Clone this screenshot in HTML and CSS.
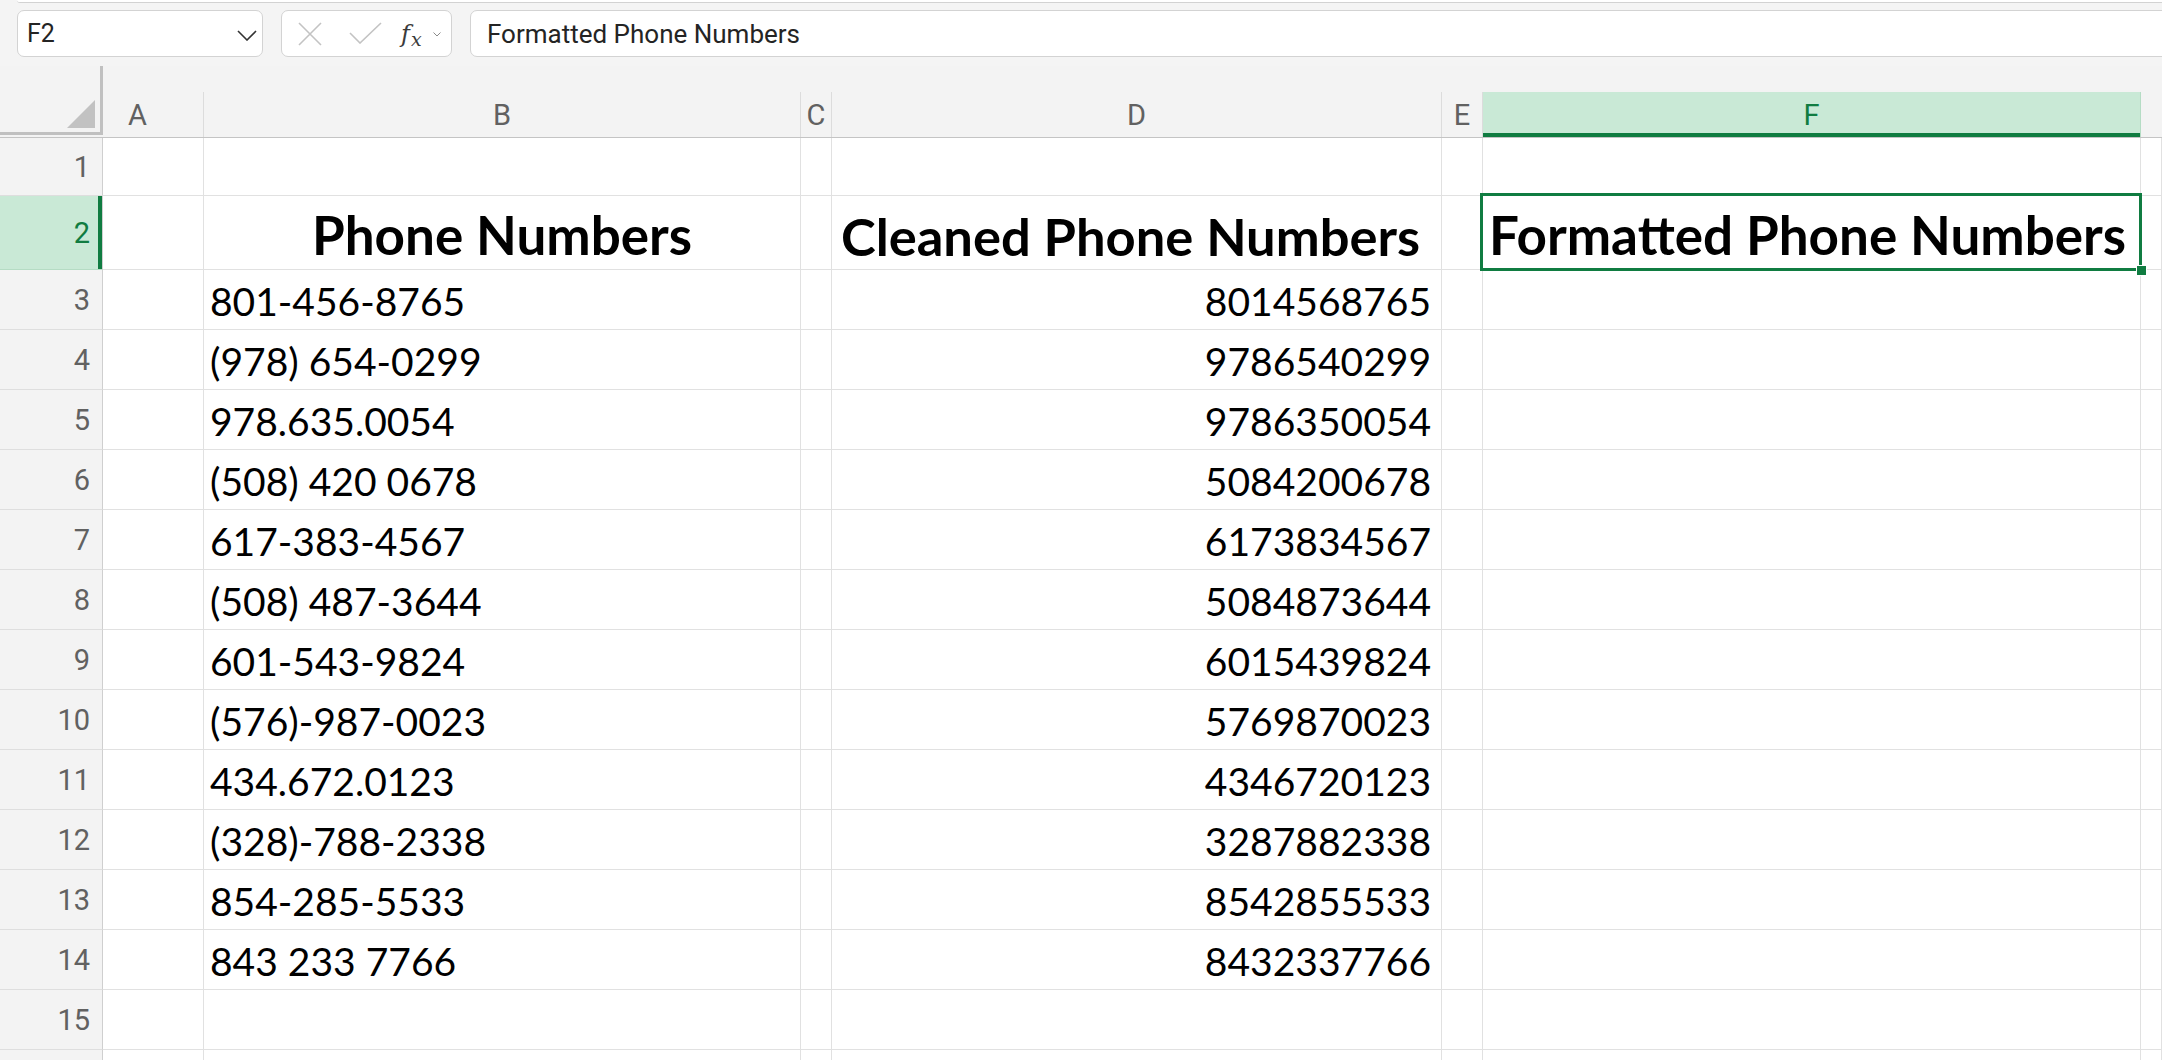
FILE: index.html
```html
<!DOCTYPE html>
<html lang="en">
<head>
<meta charset="utf-8">
<title>Phone Numbers</title>
<link rel="stylesheet" href="styles.css">
</head>
<body>
<div class="app">
  <div class="ribbon-edge"></div>
  <div class="fbar">
    <div class="namebox">
      <span class="nb-text">F2</span>
      <svg class="nb-chev" width="20" height="11" viewBox="0 0 20 11"><path d="M1 1 L10 10 L19 1" fill="none" stroke="#333" stroke-width="1.6"/></svg>
    </div>
    <div class="fxbox">
      <svg class="ic-x" width="24" height="24" viewBox="0 0 24 24"><path d="M1 1 L23 23 M23 1 L1 23" fill="none" stroke="#c3c3c3" stroke-width="1.6"/></svg>
      <svg class="ic-check" width="33" height="22" viewBox="0 0 33 22"><path d="M1 11 L11 21 L32 1" fill="none" stroke="#c3c3c3" stroke-width="1.6"/></svg>
      <span class="fx"><i class="fx-f">f</i><i class="fx-x">x</i></span>
      <svg class="ic-small" width="8" height="5" viewBox="0 0 8 5"><path d="M0.5 0.5 L4 4 L7.5 0.5" fill="none" stroke="#8a8a8a" stroke-width="1"/></svg>
    </div>
    <div class="formula">Formatted Phone Numbers</div>
  </div>

  <div class="sheet">
    <div class="row hdr">
      <div class="corner"><span class="tri"></span></div>
      <div class="ch"><div class="lab lab-a">A</div></div>
      <div class="ch"><div class="lab">B</div></div>
      <div class="ch"><div class="lab">C</div></div>
      <div class="ch"><div class="lab">D</div></div>
      <div class="ch"><div class="lab">E</div></div>
      <div class="ch sel"><div class="lab">F</div></div>
      <div class="ch"><div class="lab last"></div></div>
    </div>

    <div class="row r1">
      <div class="rh">1</div><div></div><div></div><div></div><div></div><div></div><div></div><div></div>
    </div>

    <div class="row r2">
      <div class="rh sel">2</div>
      <div></div>
      <div class="c h ctr">Phone Numbers</div>
      <div></div>
      <div class="c h ctr hd-d">Cleaned Phone Numbers</div>
      <div></div>
      <div class="c h ctr hd-f active">Formatted Phone Numbers<span class="selbox"></span><span class="handle"></span></div>
      <div></div>
    </div>

    <div class="row rn"><div class="rh">3</div><div></div><div class="c t">801-456-8765</div><div></div><div class="c t num">8014568765</div><div></div><div></div><div></div></div>
    <div class="row rn"><div class="rh">4</div><div></div><div class="c t">(978) 654-0299</div><div></div><div class="c t num">9786540299</div><div></div><div></div><div></div></div>
    <div class="row rn"><div class="rh">5</div><div></div><div class="c t">978.635.0054</div><div></div><div class="c t num">9786350054</div><div></div><div></div><div></div></div>
    <div class="row rn"><div class="rh">6</div><div></div><div class="c t">(508) 420 0678</div><div></div><div class="c t num">5084200678</div><div></div><div></div><div></div></div>
    <div class="row rn"><div class="rh">7</div><div></div><div class="c t">617-383-4567</div><div></div><div class="c t num">6173834567</div><div></div><div></div><div></div></div>
    <div class="row rn"><div class="rh">8</div><div></div><div class="c t">(508) 487-3644</div><div></div><div class="c t num">5084873644</div><div></div><div></div><div></div></div>
    <div class="row rn"><div class="rh">9</div><div></div><div class="c t">601-543-9824</div><div></div><div class="c t num">6015439824</div><div></div><div></div><div></div></div>
    <div class="row rn"><div class="rh">10</div><div></div><div class="c t">(576)-987-0023</div><div></div><div class="c t num">5769870023</div><div></div><div></div><div></div></div>
    <div class="row rn"><div class="rh">11</div><div></div><div class="c t">434.672.0123</div><div></div><div class="c t num">4346720123</div><div></div><div></div><div></div></div>
    <div class="row rn"><div class="rh">12</div><div></div><div class="c t">(328)-788-2338</div><div></div><div class="c t num">3287882338</div><div></div><div></div><div></div></div>
    <div class="row rn"><div class="rh">13</div><div></div><div class="c t">854-285-5533</div><div></div><div class="c t num">8542855533</div><div></div><div></div><div></div></div>
    <div class="row rn"><div class="rh">14</div><div></div><div class="c t">843 233 7766</div><div></div><div class="c t num">8432337766</div><div></div><div></div><div></div></div>
    <div class="row rn"><div class="rh">15</div><div></div><div></div><div></div><div></div><div></div><div></div><div></div></div>
    <div class="row rn"><div class="rh"></div><div></div><div></div><div></div><div></div><div></div><div></div><div></div></div>
  </div>
</div>
</body>
</html>
```

FILE: styles.css
```css
html, body {
  margin: 0;
  padding: 0;
}
body {
  width: 2162px;
  height: 1060px;
  overflow: hidden;
  background: #f4f4f4;
  font-family: Roboto, "Liberation Sans", sans-serif;
}
.app {
  width: 2162px;
  height: 1060px;
  overflow: hidden;
}

/* ribbon bottom edge */
.ribbon-edge {
  height: 2px;
  margin-left: 17px;
  background: #ffffff;
  border-bottom: 1px solid #d2d2d2;
  border-bottom-left-radius: 8px;
}

/* formula bar */
.fbar {
  display: flex;
  align-items: stretch;
  gap: 18px;
  height: 47px;
  margin-top: 7px;
  padding-left: 17px;
  margin-right: -30px;
}
.namebox, .fxbox, .formula {
  box-sizing: border-box;
  background: #ffffff;
  border: 1px solid #d3d3d3;
  border-radius: 7px;
  display: flex;
  align-items: center;
}
.namebox {
  width: 246px;
  padding: 0 5px 0 9px;
  justify-content: space-between;
}
.nb-text {
  font-size: 25px;
  color: #242424;
}
.nb-chev {
  margin-top: 3px;
}
.fxbox {
  width: 171px;
  padding-left: 16px;
}
.ic-x {
  margin-top: 1px;
}
.ic-check {
  margin-left: 27px;
  margin-top: -1px;
}
.fx {
  margin-left: 19px;
  display: flex;
  align-items: baseline;
  color: #3b3b3b;
  font-family: "DejaVu Serif", "Liberation Serif", serif;
}
.fx-f {
  font-size: 24px;
}
.fx-x {
  font-size: 19px;
  margin-left: 1px;
  position: relative;
  top: 4px;
}
.ic-small {
  margin-left: 11px;
  margin-top: 2px;
}
.formula {
  flex: 1;
  padding-left: 16px;
  font-size: 26px;
  color: #242424;
}

/* sheet */
.sheet {
  margin-top: 9px;
}
.row {
  display: grid;
  grid-template-columns: 103px 101px 597px 31px 610px 41px 658px 1fr;
  box-sizing: border-box;
}
.row > div {
  box-sizing: border-box;
  background: #ffffff;
  border-right: 1px solid #e1e1e1;
  border-bottom: 1px solid #e1e1e1;
  min-width: 0;
}
.hdr {
  height: 72px;
  border-bottom: 1px solid #c4c4c4;
  background: #f3f3f3;
}
.hdr > div {
  border: none;
  background: #f3f3f3;
}
.corner {
  position: relative;
  height: 69px;
  border-right: 3px solid #c0c0c0 !important;
  border-bottom: 3px solid #c0c0c0 !important;
}
.tri {
  position: absolute;
  right: 5px;
  bottom: 4px;
  width: 0;
  height: 0;
  border-left: 28px solid transparent;
  border-bottom: 28px solid #c2c2c2;
}
.ch {
  padding-top: 26px;
}
.lab {
  box-sizing: border-box;
  height: 45px;
  border-right: 1px solid #dcdcdc;
  display: flex;
  align-items: center;
  justify-content: center;
  font-size: 29px;
  color: #616161;
}
.lab.lab-a {
  justify-content: flex-start;
  padding-left: 25px;
}
.lab.last {
  border-right: none;
}
.ch.sel .lab {
  background: #c9e9d6;
  color: #107c41;
  border-right-color: #b5dcc4;
  box-shadow: inset 0 -4px 0 #107c41;
}

.r1 { height: 58px; }
.r2 { height: 74px; }
.rn { height: 60px; }

.row > .rh {
  background: #f3f3f3;
  border-right: 1px solid #cfcfcf;
  border-bottom: 1px solid #dedede;
  display: flex;
  align-items: center;
  justify-content: flex-end;
  padding-right: 12px;
  font-size: 29px;
  color: #616161;
}
.row > .rh.sel {
  background: #c9e9d6;
  color: #107c41;
  box-shadow: inset -4px 0 0 #107c41;
  border-bottom-color: #b5dcc4;
}

.c {
  display: flex;
  align-items: flex-end;
  white-space: nowrap;
  font-family: Lato, "Liberation Sans", sans-serif;
  color: #000000;
  line-height: 1.2;
}
.t {
  font-size: 39px;
  padding: 0 10px 4px 6px;
}
.num {
  justify-content: flex-end;
}
.h {
  font-weight: 700;
  font-size: 53px;
  padding-bottom: 2px;
}
.ctr {
  justify-content: center;
}
.hd-d {
  font-size: 52.5px;
  padding-right: 12px;
}
.hd-f {
  padding-right: 8px;
}
.active {
  position: relative;
}
.selbox {
  position: absolute;
  left: -3px;
  top: -3px;
  right: -2px;
  bottom: -2px;
  border: 3px solid #107c41;
  pointer-events: none;
}
.handle {
  position: absolute;
  right: -7px;
  bottom: -7px;
  width: 9px;
  height: 9px;
  background: #107c41;
  border: 1px solid #ffffff;
}
```
